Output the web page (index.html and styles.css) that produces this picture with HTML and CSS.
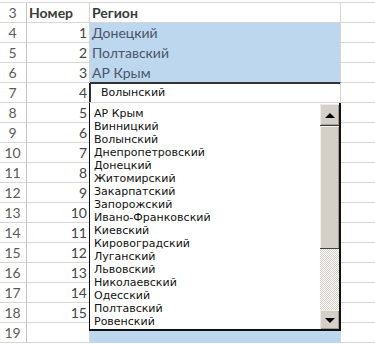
FILE: index.html
```html
<!DOCTYPE html>
<html lang="ru">
<head>
    <meta charset="UTF-8">
    <meta name="viewport" content="width=device-width, initial-scale=1.0">
    <title>Регионы</title>
    <link rel="stylesheet" href="styles.css">
</head>
<body>
    <div class="sheet">
        <!-- Header row -->
        <div class="row">
            <div class="rh">3</div>
            <div class="cell b head">Номер</div>
            <div class="cell c head">Регион</div>
            <div class="cell d"></div>
        </div>

        <div class="row">
            <div class="rh">4</div>
            <div class="cell b">1</div>
            <div class="cell c fill">Донецкий</div>
            <div class="cell d"></div>
        </div>
        <div class="row">
            <div class="rh">5</div>
            <div class="cell b">2</div>
            <div class="cell c fill">Полтавский</div>
            <div class="cell d"></div>
        </div>
        <div class="row">
            <div class="rh">6</div>
            <div class="cell b">3</div>
            <div class="cell c fill above-active">АР Крым</div>
            <div class="cell d"></div>
        </div>
        <div class="row">
            <div class="rh">7</div>
            <div class="cell b left-of-active">4</div>
            <div class="cell c active">Волынский</div>
            <div class="cell d"></div>
        </div>

        <div class="row"><div class="rh">8</div><div class="cell b">5</div><div class="cell c"></div><div class="cell d"></div></div>
        <div class="row"><div class="rh">9</div><div class="cell b">6</div><div class="cell c"></div><div class="cell d"></div></div>
        <div class="row"><div class="rh">10</div><div class="cell b">7</div><div class="cell c"></div><div class="cell d"></div></div>
        <div class="row"><div class="rh">11</div><div class="cell b">8</div><div class="cell c"></div><div class="cell d"></div></div>
        <div class="row"><div class="rh">12</div><div class="cell b">9</div><div class="cell c"></div><div class="cell d"></div></div>
        <div class="row"><div class="rh">13</div><div class="cell b">10</div><div class="cell c"></div><div class="cell d"></div></div>
        <div class="row"><div class="rh">14</div><div class="cell b">11</div><div class="cell c"></div><div class="cell d"></div></div>
        <div class="row"><div class="rh">15</div><div class="cell b">12</div><div class="cell c"></div><div class="cell d"></div></div>
        <div class="row"><div class="rh">16</div><div class="cell b">13</div><div class="cell c"></div><div class="cell d"></div></div>
        <div class="row"><div class="rh">17</div><div class="cell b">14</div><div class="cell c"></div><div class="cell d"></div></div>
        <div class="row"><div class="rh">18</div><div class="cell b">15</div><div class="cell c"></div><div class="cell d"></div></div>
        <div class="row"><div class="rh">19</div><div class="cell b"></div><div class="cell c fill"></div><div class="cell d"></div></div>
    </div>

    <!-- Open validation list -->
    <div class="dropdown">
        <ul class="options">
            <li>АР Крым</li>
            <li>Винницкий</li>
            <li>Волынский</li>
            <li>Днепропетровский</li>
            <li>Донецкий</li>
            <li>Житомирский</li>
            <li>Закарпатский</li>
            <li>Запорожский</li>
            <li>Ивано-Франковский</li>
            <li>Киевский</li>
            <li>Кировоградский</li>
            <li>Луганский</li>
            <li>Львовский</li>
            <li>Николаевский</li>
            <li>Одесский</li>
            <li>Полтавский</li>
            <li>Ровенский</li>
        </ul>
        <div class="scrollbar">
            <div class="sb-btn"><span class="arrow up"></span></div>
            <div class="sb-thumb"></div>
            <div class="sb-track"></div>
            <div class="sb-btn down"><span class="arrow dn"></span></div>
        </div>
    </div>
</body>
</html>
```

FILE: styles.css
```css
body {
    margin: 0;
    position: relative;
    height: 345px;
    overflow: hidden;
    background: #fff;
    font-family: Lato, "Open Sans", sans-serif;
    font-size: 14px;
    color: #333;
}

.sheet {
    margin-top: 2px;
    border-top: 1px solid #d6d6d6;
}

.row {
    display: flex;
    height: 20px;
}

.rh,
.cell {
    box-sizing: border-box;
    height: 20px;
    line-height: 19px;
    border-bottom: 1px solid #d6d6d6;
    border-right: 1px solid #d6d6d6;
    white-space: nowrap;
    overflow: hidden;
}

.rh {
    width: 27px;
    text-align: center;
    color: #5a5a5a;
    border-right-color: #c4c4c4;
    padding-right: 1px;
}

.cell.b {
    width: 63px;
    text-align: right;
    padding-right: 2px;
    color: #444;
}

.cell.c {
    width: 251px;
    padding-left: 2px;
}

.cell.d {
    flex: 1;
    border-right: none;
}

.cell.head {
    font-weight: bold;
    color: #3a3a3a;
    text-align: left;
    padding-left: 2px;
}

.cell.fill {
    background-color: #bdd7ee;
    border-bottom-color: #bdd7ee;
    color: #4a5568;
}

.cell.above-active {
    border-bottom-color: #333;
}

.cell.left-of-active {
    border-right-color: #222;
}

.cell.active {
    box-shadow: inset 1px 1px #333;
    font-family: "DejaVu Sans", sans-serif;
    font-size: 11px;
    line-height: 18px;
    color: #111;
    padding-left: 11px;
    padding-top: 1px;
}

/* dropdown list of the data validation */
.dropdown {
    position: absolute;
    left: 89px;
    top: 103px;
    width: 252px;
    height: 228px;
    box-sizing: border-box;
    display: flex;
    background: #fff;
    border-left: 1px solid #111;
    border-right: 2px solid #111;
    border-bottom: 2px solid #111;
}

.options {
    flex: 1;
    margin: 0;
    padding: 4px 0 0 4px;
    list-style: none;
    font-family: "DejaVu Sans", sans-serif;
    font-size: 11px;
    line-height: 13px;
    color: #111;
}

.scrollbar {
    width: 19px;
    margin-top: 1px;
    display: flex;
    flex-direction: column;
}

.sb-btn {
    height: 22px;
    box-sizing: border-box;
    background: #d4d0c8;
    border-bottom: 1px solid #404040;
    box-shadow: inset 1px 1px #ecebe6, inset -1px -1px #a09c94;
    display: flex;
    align-items: center;
    justify-content: center;
}

.sb-btn.down {
    height: 19px;
    border-bottom: none;
}

.arrow {
    width: 0;
    height: 0;
    border-left: 5px solid transparent;
    border-right: 5px solid transparent;
}

.arrow.up {
    border-bottom: 5px solid #000;
    margin-top: 1px;
}

.arrow.dn {
    border-top: 5px solid #000;
    margin-top: 1px;
}

.sb-thumb {
    height: 123px;
    box-sizing: border-box;
    background: #d4d0c8;
    border-bottom: 1px solid #404040;
    box-shadow: inset 1px 1px #f2f1ec, inset -1px 0 #a09c94;
}

.sb-track {
    flex: 1;
    background: repeating-conic-gradient(#d4d0c8 0 25%, #fff 0 50%) 0 0 / 2px 2px;
}
```
